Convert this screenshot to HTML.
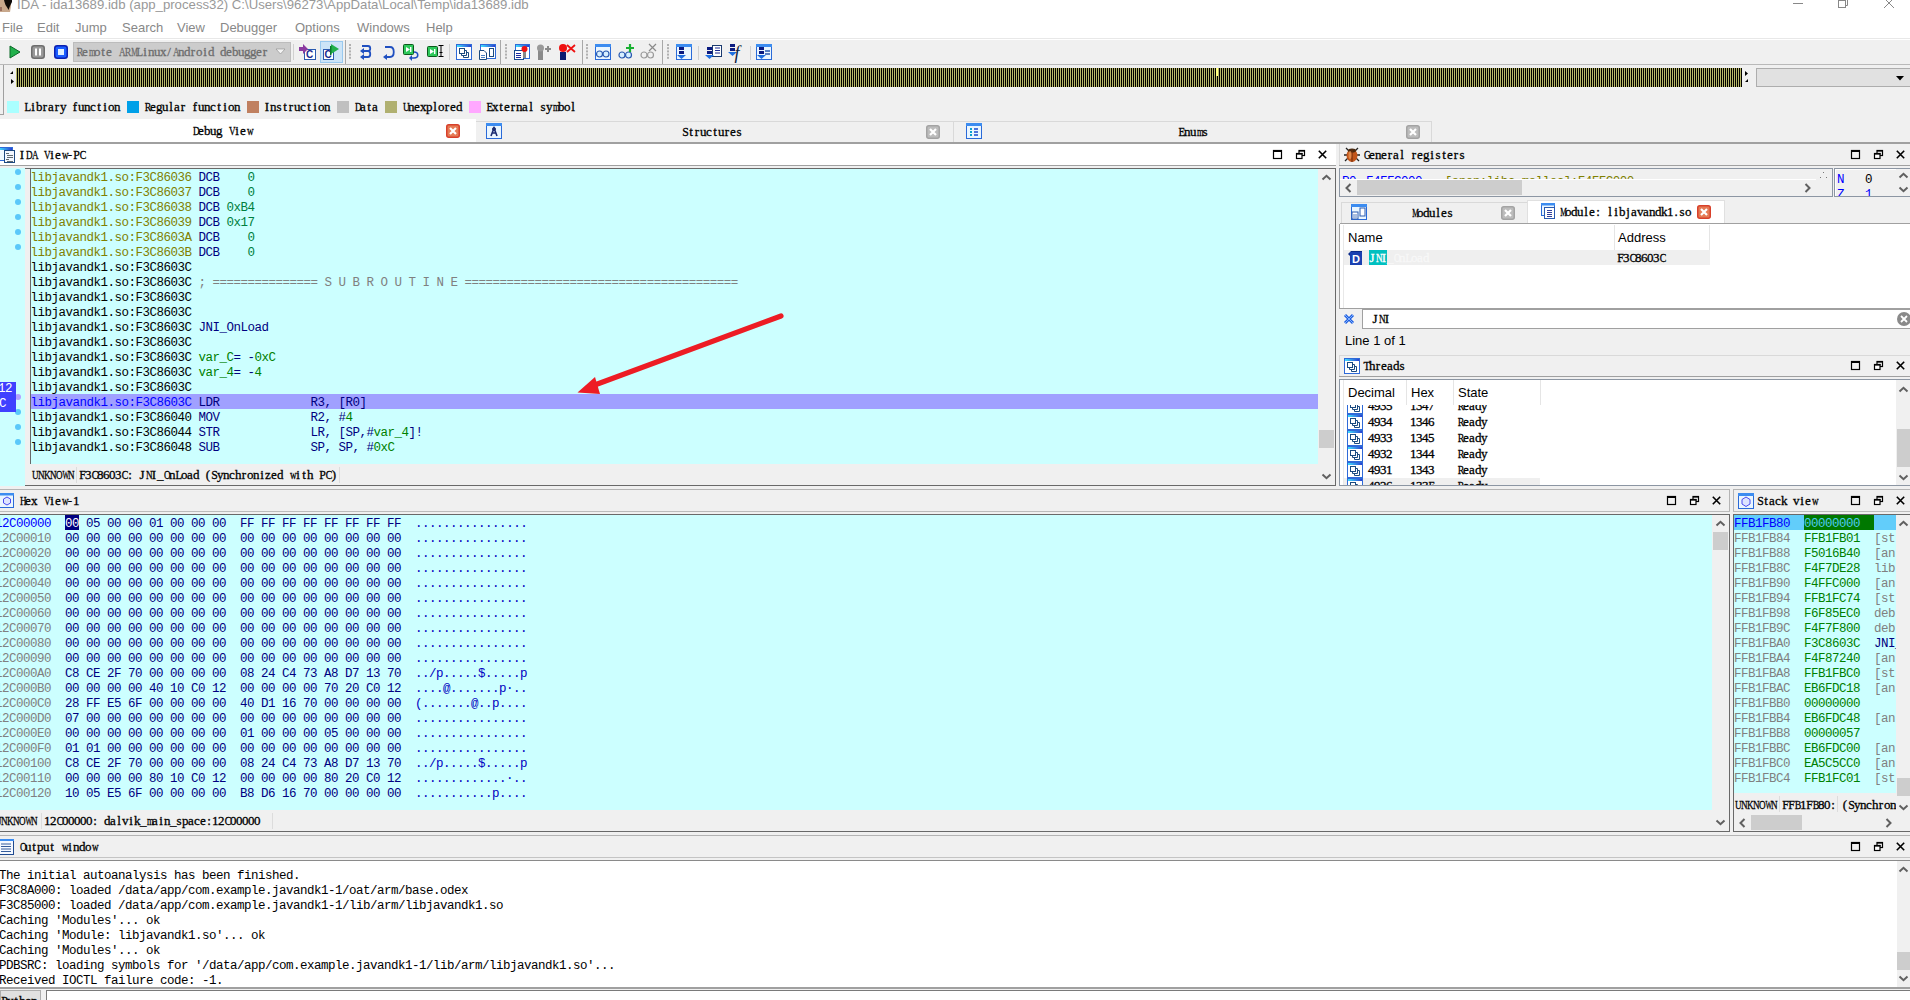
<!DOCTYPE html><html><head><meta charset="utf-8"><style>
*{margin:0;padding:0;box-sizing:border-box}
html,body{width:1910px;height:1000px;overflow:hidden;background:#f0f0f0;position:relative}
body{font-family:"Liberation Sans",sans-serif}
.a{position:absolute}
.m{font-family:"Liberation Mono",monospace;font-size:12.5px;letter-spacing:-0.5px;line-height:15px;white-space:pre}
.u{position:absolute;font-family:"Liberation Serif",serif;font-size:13px;line-height:12px;white-space:pre;color:#000;-webkit-text-stroke:0.3px currentColor}
.u i{display:inline-block;width:6px;text-align:center;font-style:normal}
.s{position:absolute;font-family:"Liberation Sans",sans-serif;white-space:pre;line-height:14px}
svg{position:absolute;overflow:visible}
</style></head><body>
<div class="a" style="left:0px;top:0px;width:1910px;height:38px;background:#fff"></div>
<div class="a" style="left:0px;top:38px;width:1910px;height:1px;background:#e8e8e8"></div>
<svg style="left:0px;top:0px" width="12" height="12" viewBox="0 0 12 12"><path d="M0 0H11V6L10 12H0Z" fill="#c8a88c"/><path d="M4 0H12V2L11 4L10 6L8.5 10L7.5 8L5.5 5L4.5 2Z" fill="#0e0a08"/><rect x="0" y="7" width="2" height="4" fill="#9a7060"/></svg>
<div class="s" style="left:17px;top:-3px;font-size:13.2px;line-height:16px;color:#999">IDA - ida13689.idb (app_process32) C:\Users\96273\AppData\Local\Temp\ida13689.idb</div>
<svg style="left:1793px;top:3px" width="10" height="1" viewBox="0 0 10 1"><rect width="10" height="1" fill="#888"/></svg>
<svg style="left:1838px;top:0px" width="10" height="8" viewBox="0 0 10 8"><path d="M2.5 0V-1.5H9.5V5.5H7.5" fill="none" stroke="#888"/><rect x="0.5" y="0.5" width="7" height="7" fill="none" stroke="#888"/></svg>
<svg style="left:1884px;top:0px" width="10" height="8" viewBox="0 0 10 8"><path d="M0 -2L10 8M10 -2L0 8" stroke="#888"/></svg>
<div class="s" style="left:2px;top:20px;font-size:13px;line-height:16px;color:#888">File</div>
<div class="s" style="left:37px;top:20px;font-size:13px;line-height:16px;color:#888">Edit</div>
<div class="s" style="left:75px;top:20px;font-size:13px;line-height:16px;color:#888">Jump</div>
<div class="s" style="left:122px;top:20px;font-size:13px;line-height:16px;color:#888">Search</div>
<div class="s" style="left:177px;top:20px;font-size:13px;line-height:16px;color:#888">View</div>
<div class="s" style="left:220px;top:20px;font-size:13px;line-height:16px;color:#888">Debugger</div>
<div class="s" style="left:295px;top:20px;font-size:13px;line-height:16px;color:#888">Options</div>
<div class="s" style="left:357px;top:20px;font-size:13px;line-height:16px;color:#888">Windows</div>
<div class="s" style="left:426px;top:20px;font-size:13px;line-height:16px;color:#888">Help</div>
<div class="a" style="left:0px;top:39px;width:1910px;height:1px;background:#fff"></div>
<div class="a" style="left:0px;top:40px;width:1910px;height:24px;background:#f0f0f0"></div>
<div class="a" style="left:0px;top:64px;width:1910px;height:1px;background:#b9b9b9"></div>
<svg style="left:9px;top:45px" width="12" height="14" viewBox="0 0 12 14"><path d="M1 1L11 7L1 13Z" fill="#22b14c" stroke="#0c6a28" stroke-width="1"/></svg>
<svg style="left:31px;top:45px" width="14" height="14" viewBox="0 0 14 14"><rect x="0.75" y="0.75" width="12.5" height="12.5" rx="2.5" fill="#9a9a9a" stroke="#6e6e6e" stroke-width="1.5"/><rect x="4" y="3.5" width="2" height="7" fill="#fff"/><rect x="8" y="3.5" width="2" height="7" fill="#fff"/></svg>
<svg style="left:54px;top:45px" width="14" height="14" viewBox="0 0 14 14"><rect x="0.75" y="0.75" width="12.5" height="12.5" rx="2.5" fill="#1a5cff" stroke="#0a1fb0" stroke-width="1.5"/><rect x="4" y="4" width="6" height="6" fill="#e0f0ff"/></svg>
<div class="a" style="left:73px;top:42px;width:218px;height:20px;background:#cccccc;border:1px solid #bcbcbc"></div>
<div class="u" style="left:76px;top:46px;color:#6d6d6d"><i style="transform:scaleX(0.761)">R</i><i>e</i><i style="transform:scaleX(0.653)">m</i><i>o</i><i>t</i><i>e</i><i>&nbsp;</i><i style="transform:scaleX(0.703)">A</i><i style="transform:scaleX(0.761)">R</i><i style="transform:scaleX(0.571)">M</i><i style="transform:scaleX(0.831)">L</i><i>i</i><i>n</i><i>u</i><i>x</i><i>/</i><i style="transform:scaleX(0.703)">A</i><i>n</i><i>d</i><i>r</i><i>o</i><i>i</i><i>d</i><i>&nbsp;</i><i>d</i><i>e</i><i>b</i><i>u</i><i>g</i><i>g</i><i>e</i><i>r</i></div>
<svg style="left:276px;top:49px" width="9" height="5" viewBox="0 0 9 5"><path d="M0 0H9L4.5 5Z" fill="#f4f4f4" stroke="#8a8a8a" stroke-width="0.6"/></svg>
<div class="a" style="left:293px;top:44px;width:1px;height:16px;background:#d0d0d0"></div>
<svg style="left:299px;top:44px" width="18" height="17" viewBox="0 0 18 17"><rect x="5.5" y="5.5" width="11" height="10" fill="#fff" stroke="#2a5ab0"/><text x="7" y="14" font-family="Liberation Sans" font-weight="bold" font-size="10" fill="#1a2a90">C</text><path d="M0 3H4V0L9 5L4 10V7H0Z" fill="#8a3aa0"/></svg>
<div class="a" style="left:320px;top:41px;width:23px;height:22px;background:#cce4f7;border:1px solid #99c9ef"></div>
<svg style="left:322px;top:44px" width="18" height="17" viewBox="0 0 18 17"><rect x="1.5" y="5.5" width="10" height="10" fill="#fff" stroke="#2a5ab0"/><text x="2.5" y="14" font-family="Liberation Sans" font-weight="bold" font-size="10" fill="#1a2a90">C</text><path d="M9 0L17 5L9 10Z" fill="#22b14c"/><rect x="8" y="2" width="1.5" height="9" fill="#0a7a2a"/></svg>
<div class="a" style="left:345px;top:40px;width:1px;height:24px;background:#a8a8a8"></div>
<svg style="left:349px;top:44px" width="3" height="16" viewBox="0 0 3 16"><rect x="0" y="0.0" width="2" height="2" fill="#b0b0b0"/><rect x="0" y="3.2" width="2" height="2" fill="#b0b0b0"/><rect x="0" y="6.4" width="2" height="2" fill="#b0b0b0"/><rect x="0" y="9.600000000000001" width="2" height="2" fill="#b0b0b0"/><rect x="0" y="12.8" width="2" height="2" fill="#b0b0b0"/></svg>
<svg style="left:359px;top:44px" width="14" height="17" viewBox="0 0 14 17"><path d="M3 2H9C12 2 12 7 9 7H4M9 7C12 7 12 13 9 13H3" fill="none" stroke="#1f4fc0" stroke-width="1.8"/><path d="M1 7L5 4V10Z" fill="#1f4fc0"/><path d="M1 13L5 10V16Z" fill="#1f4fc0"/></svg>
<svg style="left:382px;top:44px" width="14" height="17" viewBox="0 0 14 17"><path d="M3 3H8C13 3 13 13 8 13H3" fill="none" stroke="#1f4fc0" stroke-width="1.8"/><path d="M1 13L5 10V16Z" fill="#1f4fc0"/></svg>
<svg style="left:403px;top:44px" width="17" height="17" viewBox="0 0 17 17"><rect x="0.5" y="0.5" width="10" height="10" rx="1" fill="#2ec85a" stroke="#0a5a1a"/><path d="M3 3L7 5.5L3 8Z" fill="#fff"/><rect x="7" y="3" width="1.4" height="5" fill="#fff"/><path d="M11 8C16 8 16 14 11 14H8" fill="none" stroke="#1f4fc0" stroke-width="1.6"/><path d="M6 14L9 11V17Z" fill="#1f4fc0"/></svg>
<svg style="left:427px;top:43px" width="17" height="17" viewBox="0 0 17 17"><rect x="0.5" y="3.5" width="10" height="10" rx="1" fill="#2ec85a" stroke="#0a5a1a"/><path d="M3 6L7 8.5L3 11Z" fill="#fff"/><rect x="7" y="6" width="1.4" height="5" fill="#fff"/><path d="M11.5 2.5H16.5M11.5 13.5H16.5M14 2.5V13.5M12.5 9.5H15.5" stroke="#000" stroke-width="1"/></svg>
<div class="a" style="left:449px;top:44px;width:1px;height:16px;background:#d0d0d0"></div>
<svg style="left:456px;top:44px" width="17" height="17" viewBox="0 0 17 17"><defs><linearGradient id="tg" x1="0" x2="1"><stop offset="0" stop-color="#40e0ff"/><stop offset="1" stop-color="#2a40d0"/></linearGradient></defs><rect x="0.5" y="0.5" width="15" height="15" fill="#fff" stroke="#2f6ad8"/><rect x="1" y="1" width="14" height="2" fill="url(#tg)"/><rect x="3.5" y="4.5" width="5" height="5" fill="#fff" stroke="#1a4a80"/><path d="M9 6.5H10.5V11.5H5.5V10" fill="none" stroke="#1a4a80"/><path d="M11 8.5H12.5V13.5H7.5V12" fill="none" stroke="#1a4a80"/></svg>
<svg style="left:479px;top:44px" width="17" height="17" viewBox="0 0 17 17"><rect x="1.5" y="0.5" width="15" height="14" fill="#fff" stroke="#2f6ad8"/><rect x="2" y="1" width="14" height="2" fill="url(#tg)"/><path d="M0.5 6.5H5L7.5 9V15.5H0.5Z" fill="#fff" stroke="#1a4a80"/><path d="M2 11.5H6M2 13.5H6" stroke="#4a80c0"/><rect x="10.5" y="4.5" width="4" height="8" fill="#fff" stroke="#1a4a80"/></svg>
<div class="a" style="left:500px;top:40px;width:1px;height:24px;background:#a8a8a8"></div>
<svg style="left:505px;top:44px" width="3" height="16" viewBox="0 0 3 16"><rect x="0" y="0.0" width="2" height="2" fill="#b0b0b0"/><rect x="0" y="3.2" width="2" height="2" fill="#b0b0b0"/><rect x="0" y="6.4" width="2" height="2" fill="#b0b0b0"/><rect x="0" y="9.600000000000001" width="2" height="2" fill="#b0b0b0"/><rect x="0" y="12.8" width="2" height="2" fill="#b0b0b0"/></svg>
<svg style="left:514px;top:44px" width="17" height="17" viewBox="0 0 17 17"><rect x="1.5" y="0.5" width="14" height="14" fill="#fff" stroke="#2f6ad8"/><rect x="2" y="1" width="13" height="2" fill="url(#tg)"/><rect x="0.5" y="6.5" width="9" height="9" fill="#fff" stroke="#1a4a90"/><path d="M2 9.5H7M2 11.5H7M2 13.5H7" stroke="#1a2aa0"/><rect x="9" y="7" width="3" height="7" fill="#888"/><circle cx="10.5" cy="5" r="3" fill="#ee1111"/></svg>
<svg style="left:537px;top:44px" width="17" height="17" viewBox="0 0 17 17"><rect x="1" y="6" width="5" height="10" fill="#8a8a8a"/><circle cx="3.5" cy="4" r="3.5" fill="#9a9a9a"/><path d="M8 5H14M11 2V8" stroke="#8a8a8a" stroke-width="2"/></svg>
<svg style="left:559px;top:44px" width="17" height="17" viewBox="0 0 17 17"><rect x="1" y="8" width="6" height="8" fill="#0a1a70"/><circle cx="4" cy="4" r="4" fill="#ee1111"/><path d="M8 1L16 8M16 1L8 8" stroke="#ee1111" stroke-width="1.8"/></svg>
<div class="a" style="left:582px;top:40px;width:1px;height:24px;background:#a8a8a8"></div>
<svg style="left:586px;top:44px" width="3" height="16" viewBox="0 0 3 16"><rect x="0" y="0.0" width="2" height="2" fill="#b0b0b0"/><rect x="0" y="3.2" width="2" height="2" fill="#b0b0b0"/><rect x="0" y="6.4" width="2" height="2" fill="#b0b0b0"/><rect x="0" y="9.600000000000001" width="2" height="2" fill="#b0b0b0"/><rect x="0" y="12.8" width="2" height="2" fill="#b0b0b0"/></svg>
<svg style="left:595px;top:44px" width="16" height="16" viewBox="0 0 16 16"><rect x="0.5" y="0.5" width="15" height="15" fill="#eaf6ff" stroke="#2a6ad8"/><rect x="0" y="0" width="16" height="3" fill="#3c8cf0"/><circle cx="4.5" cy="10" r="3" fill="#d8f0ff" stroke="#2a5ab0" stroke-width="1.2"/><circle cx="11" cy="10" r="3" fill="#d8f0ff" stroke="#2a5ab0" stroke-width="1.2"/></svg>
<svg style="left:618px;top:44px" width="17" height="17" viewBox="0 0 17 17"><circle cx="4" cy="11" r="3" fill="#d8f0ff" stroke="#2a5ab0" stroke-width="1.2"/><circle cx="10.5" cy="11" r="3" fill="#d8f0ff" stroke="#2a5ab0" stroke-width="1.2"/><path d="M8 4H16M12 0V8" stroke="#18b030" stroke-width="2.2"/></svg>
<svg style="left:640px;top:44px" width="17" height="17" viewBox="0 0 17 17"><circle cx="4" cy="11" r="3" fill="#f0f0f0" stroke="#9a9a9a" stroke-width="1.2"/><circle cx="10.5" cy="11" r="3" fill="#f0f0f0" stroke="#9a9a9a" stroke-width="1.2"/><path d="M9 0L16 7M16 0L9 7" stroke="#8a8a8a" stroke-width="1.2"/></svg>
<div class="a" style="left:662px;top:40px;width:1px;height:24px;background:#a8a8a8"></div>
<svg style="left:667px;top:44px" width="3" height="16" viewBox="0 0 3 16"><rect x="0" y="0.0" width="2" height="2" fill="#b0b0b0"/><rect x="0" y="3.2" width="2" height="2" fill="#b0b0b0"/><rect x="0" y="6.4" width="2" height="2" fill="#b0b0b0"/><rect x="0" y="9.600000000000001" width="2" height="2" fill="#b0b0b0"/><rect x="0" y="12.8" width="2" height="2" fill="#b0b0b0"/></svg>
<svg style="left:676px;top:44px" width="16" height="16" viewBox="0 0 16 16"><rect x="0.5" y="0.5" width="15" height="15" fill="#eaf6ff" stroke="#2a6ad8"/><rect x="0" y="0" width="16" height="3" fill="#3c8cf0"/><rect x="3" y="3" width="5" height="3" fill="#0a1a80"/><rect x="3" y="7" width="5" height="3" fill="#0a1a80"/><path d="M1 11H10L5.5 15Z" fill="#1f6fe0"/></svg>
<div class="a" style="left:698px;top:46px;width:1px;height:14px;background:#d0d0d0"></div>
<svg style="left:705px;top:44px" width="17" height="17" viewBox="0 0 17 17"><rect x="7.5" y="1.5" width="9" height="11" fill="#fff" stroke="#1a3a70"/><path d="M10 4H15M10 6.5H15M10 9H15" stroke="#1a2a90"/><rect x="2" y="3" width="5" height="3" fill="#0a1a80"/><rect x="2" y="7" width="5" height="3" fill="#0a1a80"/><path d="M0 11H9L4.5 15Z" fill="#1f6fe0"/></svg>
<svg style="left:728px;top:44px" width="17" height="17" viewBox="0 0 17 17"><rect x="2" y="0" width="5" height="3" fill="#0a1a80"/><rect x="2" y="4" width="5" height="3" fill="#0a1a80"/><path d="M0 8H9L4.5 12Z" fill="#1f6fe0"/><text x="6.5" y="15" font-family="Liberation Serif" font-style="italic" font-size="18" fill="#0a1a40">f</text></svg>
<div class="a" style="left:750px;top:46px;width:1px;height:14px;background:#d0d0d0"></div>
<svg style="left:756px;top:44px" width="16" height="16" viewBox="0 0 16 16"><rect x="0.5" y="0.5" width="15" height="15" fill="#eaf6ff" stroke="#2a6ad8"/><rect x="0" y="0" width="16" height="3" fill="#3c8cf0"/><rect x="3" y="3" width="5" height="3" fill="#0a1a80"/><rect x="3" y="7" width="5" height="3" fill="#0a1a80"/><path d="M1 11H10L5.5 15Z" fill="#1f6fe0"/><path d="M9 7H14M9 10H14" stroke="#2a5ab0" stroke-width="1.5"/></svg>
<div class="a" style="left:3px;top:65px;width:1px;height:50px;background:#a0a0a0"></div>
<div class="a" style="left:0px;top:114px;width:4px;height:1px;background:#a0a0a0"></div>
<div class="a" style="left:16px;top:68px;width:1726px;height:19px;background:repeating-linear-gradient(90deg,#b8b868 0 1px,#000 1px 2px)"></div>
<div class="a" style="left:1216px;top:68px;width:2px;height:8px;background:#ffff80"></div>
<svg style="left:10px;top:71px" width="3" height="3" viewBox="0 0 3 3"><path d="M0 3L3 0V3Z" fill="#000"/></svg>
<svg style="left:11px;top:79px" width="3" height="5" viewBox="0 0 3 5"><path d="M0 0L3 2.5L0 5Z" fill="#000"/></svg>
<svg style="left:1745px;top:71px" width="3" height="5" viewBox="0 0 3 5"><path d="M0 0L3 2.5L0 5Z" fill="#000"/></svg>
<svg style="left:1745px;top:79px" width="3" height="3" viewBox="0 0 3 3"><path d="M0 3L3 0V3Z" fill="#000"/></svg>
<div class="a" style="left:1756px;top:68px;width:154px;height:19px;background:#e1e1e1;border:1px solid #adadad;border-right:none"></div>
<svg style="left:1896px;top:76px" width="8" height="5" viewBox="0 0 8 5"><path d="M0 0H8L4 4.5Z" fill="#000"/></svg>
<div class="a" style="left:7px;top:101px;width:12px;height:12px;background:#aaffff"></div>
<div class="u" style="left:24px;top:101px;color:#000;"><i style="transform:scaleX(0.831)">L</i><i>i</i><i>b</i><i>r</i><i>a</i><i>r</i><i>y</i><i>&nbsp;</i><i>f</i><i>u</i><i>n</i><i>c</i><i>t</i><i>i</i><i>o</i><i>n</i></div>
<div class="a" style="left:127px;top:101px;width:12px;height:12px;background:#00a0e8"></div>
<div class="u" style="left:144px;top:101px;color:#000;"><i style="transform:scaleX(0.761)">R</i><i>e</i><i>g</i><i>u</i><i>l</i><i>a</i><i>r</i><i>&nbsp;</i><i>f</i><i>u</i><i>n</i><i>c</i><i>t</i><i>i</i><i>o</i><i>n</i></div>
<div class="a" style="left:247px;top:101px;width:12px;height:12px;background:#c08060"></div>
<div class="u" style="left:264px;top:101px;color:#000;"><i>I</i><i>n</i><i>s</i><i>t</i><i>r</i><i>u</i><i>c</i><i>t</i><i>i</i><i>o</i><i>n</i></div>
<div class="a" style="left:337px;top:101px;width:12px;height:12px;background:#c0c0c0"></div>
<div class="u" style="left:354px;top:101px;color:#000;"><i style="transform:scaleX(0.703)">D</i><i>a</i><i>t</i><i>a</i></div>
<div class="a" style="left:385px;top:101px;width:12px;height:12px;background:#b0b070"></div>
<div class="u" style="left:402px;top:101px;color:#000;"><i style="transform:scaleX(0.703)">U</i><i>n</i><i>e</i><i>x</i><i>p</i><i>l</i><i>o</i><i>r</i><i>e</i><i>d</i></div>
<div class="a" style="left:469px;top:101px;width:12px;height:12px;background:#ffa8ff"></div>
<div class="u" style="left:486px;top:101px;color:#000;"><i style="transform:scaleX(0.831)">E</i><i>x</i><i>t</i><i>e</i><i>r</i><i>n</i><i>a</i><i>l</i><i>&nbsp;</i><i>s</i><i>y</i><i style="transform:scaleX(0.653)">m</i><i>b</i><i>o</i><i>l</i></div>
<div class="a" style="left:0px;top:120px;width:1910px;height:24px;background:#f0f0f0"></div>
<div class="a" style="left:0px;top:119px;width:476px;height:24px;background:#fff"></div>
<div class="a" style="left:476px;top:121px;width:478px;height:21px;background:#f0f0f0;border-top:1px solid #d9d9d9;border-right:1px solid #d9d9d9"></div>
<div class="a" style="left:954px;top:121px;width:478px;height:21px;background:#f0f0f0;border-top:1px solid #d9d9d9;border-right:1px solid #d9d9d9"></div>
<div class="a" style="left:0px;top:142px;width:1910px;height:2px;background:#a0a0a0"></div>
<div class="u" style="left:192px;top:125px;color:#000;"><i style="transform:scaleX(0.703)">D</i><i>e</i><i>b</i><i>u</i><i>g</i><i>&nbsp;</i><i style="transform:scaleX(0.703)">V</i><i>i</i><i>e</i><i style="transform:scaleX(0.703)">w</i></div>
<svg style="left:446px;top:124px" width="14" height="14" viewBox="0 0 14 14"><rect x="0.75" y="0.75" width="12.5" height="12.5" rx="2" fill="#e57a55" stroke="#d8402a" stroke-width="1.5"/><path d="M4 4L10 10M10 4L4 10" stroke="#fff" stroke-width="2.2"/></svg>
<svg style="left:486px;top:123px" width="16" height="16" viewBox="0 0 16 16"><rect x="0.5" y="0.5" width="15" height="15" fill="#eaf6ff" stroke="#2a6ad8"/><rect x="0" y="0" width="16" height="3" fill="#3c8cf0"/><path d="M5 13L8 5L11 13M6 10H10" fill="none" stroke="#1a2a70" stroke-width="1.6"/><circle cx="8" cy="6" r="1.5" fill="none" stroke="#1a2a70"/></svg>
<div class="u" style="left:682px;top:126px;color:#000;"><i style="transform:scaleX(0.912)">S</i><i>t</i><i>r</i><i>u</i><i>c</i><i>t</i><i>u</i><i>r</i><i>e</i><i>s</i></div>
<svg style="left:926px;top:125px" width="14" height="14" viewBox="0 0 14 14"><rect x="0.75" y="0.75" width="12.5" height="12.5" rx="2" fill="#bcbcbc" stroke="#a3a3a3" stroke-width="1.5"/><path d="M4 4L10 10M10 4L4 10" stroke="#fff" stroke-width="2.2"/></svg>
<svg style="left:966px;top:123px" width="16" height="16" viewBox="0 0 16 16"><rect x="0.5" y="0.5" width="15" height="15" fill="#eaf6ff" stroke="#2a6ad8"/><rect x="0" y="0" width="16" height="3" fill="#3c8cf0"/><path d="M4 6H6M4 9H6M4 12H6" stroke="#0aa0d0" stroke-width="2"/><path d="M8 6H12M8 9H12M8 12H12" stroke="#1a4ad0" stroke-width="1.5"/></svg>
<div class="u" style="left:1178px;top:126px;color:#000;"><i style="transform:scaleX(0.831)">E</i><i>n</i><i>u</i><i style="transform:scaleX(0.653)">m</i><i>s</i></div>
<svg style="left:1406px;top:125px" width="14" height="14" viewBox="0 0 14 14"><rect x="0.75" y="0.75" width="12.5" height="12.5" rx="2" fill="#bcbcbc" stroke="#a3a3a3" stroke-width="1.5"/><path d="M4 4L10 10M10 4L4 10" stroke="#fff" stroke-width="2.2"/></svg>
<div class="a" style="left:0px;top:144px;width:1336px;height:21px;background:#fff"></div>
<div class="a" style="left:0px;top:165px;width:1336px;height:1px;background:#a0a0a0"></div>
<div class="a" style="left:0px;top:166px;width:1336px;height:2px;background:#f0f0f0"></div>
<div class="a" style="left:0px;top:168px;width:1336px;height:318px;background:#f0f0f0;border-top:1px solid #696969;border-right:1px solid #696969;border-bottom:1px solid #696969"></div>
<div class="a" style="left:0px;top:168px;width:25px;height:318px;background:#ccffff"></div>
<div class="a" style="left:30px;top:168px;width:1px;height:296px;background:#696969"></div>
<div class="a" style="left:31px;top:169px;width:1287px;height:295px;background:#ccffff"></div>
<svg style="left:0px;top:147px" width="16" height="17" viewBox="0 0 16 17"><rect x="-1.5" y="0.5" width="14" height="13" fill="#f0faff" stroke="#2f6ad8"/><rect x="-1" y="1" width="13" height="2" fill="url(#tg)"/><rect x="4.5" y="3.5" width="10" height="12" fill="#f4f8ff" stroke="#1f4a80"/><path d="M6 6.5H9M7 8.5H13M7 10.5H13M6 12.5H9M7 14.5H13" stroke="#505a60" stroke-width="0.9"/></svg>
<div class="u" style="left:19px;top:149px;color:#000;"><i>I</i><i style="transform:scaleX(0.703)">D</i><i style="transform:scaleX(0.703)">A</i><i>&nbsp;</i><i style="transform:scaleX(0.703)">V</i><i>i</i><i>e</i><i style="transform:scaleX(0.703)">w</i><i>-</i><i style="transform:scaleX(0.912)">P</i><i style="transform:scaleX(0.761)">C</i></div>
<svg style="left:1273px;top:150px" width="9" height="9" viewBox="0 0 9 9"><rect x="0.5" y="0.5" width="8" height="8" fill="none" stroke="#000" stroke-width="1.2"/><rect x="0" y="0" width="9" height="2" fill="#000"/></svg>
<svg style="left:1296px;top:150px" width="9" height="9" viewBox="0 0 9 9"><rect x="3" y="0.5" width="5.5" height="5" fill="none" stroke="#000" stroke-width="1.2"/><rect x="3" y="0" width="6" height="1.6" fill="#000"/><rect x="0.5" y="3.5" width="5.5" height="5" fill="#fff" stroke="#000" stroke-width="1.2"/><rect x="0" y="3" width="6.5" height="1.6" fill="#000"/></svg>
<svg style="left:1318px;top:150px" width="9" height="9" viewBox="0 0 9 9"><path d="M0.8 0.8L8.2 8.2M8.2 0.8L0.8 8.2" stroke="#000" stroke-width="1.6"/></svg>
<div class="a" style="left:31px;top:394px;width:1287px;height:15px;background:#a0a0ff"></div>
<div class="a m" style="left:30.5px;top:171px;"><span style="color:#808000">libjavandk1.so:F3C86036</span> <span style="color:#000080">DCB</span> <span style="color:#008040">   0</span>
<span style="color:#808000">libjavandk1.so:F3C86037</span> <span style="color:#000080">DCB</span> <span style="color:#008040">   0</span>
<span style="color:#808000">libjavandk1.so:F3C86038</span> <span style="color:#000080">DCB</span> <span style="color:#008040">0xB4</span>
<span style="color:#808000">libjavandk1.so:F3C86039</span> <span style="color:#000080">DCB</span> <span style="color:#008040">0x17</span>
<span style="color:#808000">libjavandk1.so:F3C8603A</span> <span style="color:#000080">DCB</span> <span style="color:#008040">   0</span>
<span style="color:#808000">libjavandk1.so:F3C8603B</span> <span style="color:#000080">DCB</span> <span style="color:#008040">   0</span>
<span style="color:#000000">libjavandk1.so:F3C8603C</span>
<span style="color:#000000">libjavandk1.so:F3C8603C</span> <span style="color:#808080">; =============== S U B R O U T I N E =======================================</span>
<span style="color:#000000">libjavandk1.so:F3C8603C</span>
<span style="color:#000000">libjavandk1.so:F3C8603C</span>
<span style="color:#000000">libjavandk1.so:F3C8603C</span> <span style="color:#000080">JNI_OnLoad</span>
<span style="color:#000000">libjavandk1.so:F3C8603C</span>
<span style="color:#000000">libjavandk1.so:F3C8603C</span> <span style="color:#008000">var_C</span><span style="color:#000080">= -</span><span style="color:#008000">0xC</span>
<span style="color:#000000">libjavandk1.so:F3C8603C</span> <span style="color:#008000">var_4</span><span style="color:#000080">= -</span><span style="color:#008000">4</span>
<span style="color:#000000">libjavandk1.so:F3C8603C</span>
<span style="color:#0000ff">libjavandk1.so:F3C8603C</span> <span style="color:#000080">LDR             R3, [R0]</span>
<span style="color:#000000">libjavandk1.so:F3C86040</span> <span style="color:#000080">MOV             R2, #</span><span style="color:#008000">4</span>
<span style="color:#000000">libjavandk1.so:F3C86044</span> <span style="color:#000080">STR             LR, [SP,#</span><span style="color:#008000">var_4</span><span style="color:#000080">]!</span>
<span style="color:#000000">libjavandk1.so:F3C86048</span> <span style="color:#000080">SUB             SP, SP, #</span><span style="color:#008000">0xC</span></div>
<svg style="left:15px;top:169px" width="6" height="6" viewBox="0 0 6 6"><circle cx="3" cy="3" r="3" fill="#5ac8fa"/></svg>
<svg style="left:15px;top:184px" width="6" height="6" viewBox="0 0 6 6"><circle cx="3" cy="3" r="3" fill="#5ac8fa"/></svg>
<svg style="left:15px;top:199px" width="6" height="6" viewBox="0 0 6 6"><circle cx="3" cy="3" r="3" fill="#5ac8fa"/></svg>
<svg style="left:15px;top:214px" width="6" height="6" viewBox="0 0 6 6"><circle cx="3" cy="3" r="3" fill="#5ac8fa"/></svg>
<svg style="left:15px;top:229px" width="6" height="6" viewBox="0 0 6 6"><circle cx="3" cy="3" r="3" fill="#5ac8fa"/></svg>
<svg style="left:15px;top:244px" width="6" height="6" viewBox="0 0 6 6"><circle cx="3" cy="3" r="3" fill="#5ac8fa"/></svg>
<svg style="left:15px;top:409px" width="6" height="6" viewBox="0 0 6 6"><circle cx="3" cy="3" r="3" fill="#5ac8fa"/></svg>
<svg style="left:15px;top:424px" width="6" height="6" viewBox="0 0 6 6"><circle cx="3" cy="3" r="3" fill="#5ac8fa"/></svg>
<svg style="left:15px;top:439px" width="6" height="6" viewBox="0 0 6 6"><circle cx="3" cy="3" r="3" fill="#5ac8fa"/></svg>
<svg style="left:15px;top:394px" width="6" height="6" viewBox="0 0 6 6"><circle cx="3" cy="3" r="3" fill="#b4a0ff"/></svg>
<div class="a" style="left:0px;top:382px;width:16px;height:30px;background:#4040ff"></div>
<div class="a m" style="left:-2px;top:382px;color:#fff">12</div>
<div class="a m" style="left:-1px;top:397px;color:#fff">C</div>
<div class="a" style="left:1318px;top:169px;width:17px;height:316px;background:#f0f0f0"></div>
<svg style="left:1322px;top:175px" width="9" height="5" viewBox="0 0 9 5"><path d="M0.5 4.5L4.5 0.8L8.5 4.5" fill="none" stroke="#606060" stroke-width="2"/></svg>
<svg style="left:1322px;top:474px" width="9" height="5" viewBox="0 0 9 5"><path d="M0.5 0.5L4.5 4.2L8.5 0.5" fill="none" stroke="#606060" stroke-width="2"/></svg>
<div class="a" style="left:1319px;top:430px;width:15px;height:18px;background:#cdcdcd"></div>
<div class="a" style="left:31px;top:464px;width:1287px;height:21px;background:#f0f0f0"></div>
<div class="u" style="left:31px;top:469px;color:#000;"><i style="transform:scaleX(0.703)">U</i><i style="transform:scaleX(0.703)">N</i><i style="transform:scaleX(0.703)">K</i><i style="transform:scaleX(0.703)">N</i><i style="transform:scaleX(0.703)">O</i><i style="transform:scaleX(0.538)">W</i><i style="transform:scaleX(0.703)">N</i></div>
<div class="a" style="left:76px;top:467px;width:1px;height:16px;background:#dcdcdc"></div>
<div class="u" style="left:79px;top:469px;color:#000;"><i style="transform:scaleX(0.912)">F</i><i>3</i><i style="transform:scaleX(0.761)">C</i><i>8</i><i>6</i><i>0</i><i>3</i><i style="transform:scaleX(0.761)">C</i><i>:</i><i>&nbsp;</i><i>J</i><i style="transform:scaleX(0.703)">N</i><i>I</i><i>_</i><i style="transform:scaleX(0.703)">O</i><i>n</i><i style="transform:scaleX(0.831)">L</i><i>o</i><i>a</i><i>d</i><i>&nbsp;</i><i>(</i><i style="transform:scaleX(0.912)">S</i><i>y</i><i>n</i><i>c</i><i>h</i><i>r</i><i>o</i><i>n</i><i>i</i><i>z</i><i>e</i><i>d</i><i>&nbsp;</i><i style="transform:scaleX(0.703)">w</i><i>i</i><i>t</i><i>h</i><i>&nbsp;</i><i style="transform:scaleX(0.912)">P</i><i style="transform:scaleX(0.761)">C</i><i>)</i></div>
<div class="a" style="left:339px;top:467px;width:1px;height:16px;background:#dcdcdc"></div>
<svg style="left:0px;top:0px" width="1910" height="1000" viewBox="0 0 1910 1000"><line x1="781" y1="316" x2="592" y2="386" stroke="#ed1c24" stroke-width="5.2" stroke-linecap="round"/><path d="M577.5 392.5L595 377L600 394Z" fill="#ed1c24"/></svg>
<div class="a" style="left:1339px;top:144px;width:571px;height:21px;background:#f0f0f0;border-left:1px solid #d9d9d9"></div>
<div class="a" style="left:1339px;top:165px;width:571px;height:1px;background:#a0a0a0"></div>
<svg style="left:1343px;top:146px" width="18" height="17" viewBox="0 0 18 17"><path d="M3 2L6 5M15 2L12 5M1 9H4M17 9H14M2 15L5 12M16 15L13 12" stroke="#222" stroke-width="1.3"/><ellipse cx="9" cy="9.5" rx="5.5" ry="6.5" fill="#c2551a"/><ellipse cx="9" cy="4.5" rx="4" ry="2" fill="#4a2a10"/><path d="M9 4V16" stroke="#6a2a0a"/><ellipse cx="7" cy="9" rx="1.5" ry="4" fill="#f0a060" opacity="0.7"/></svg>
<div class="u" style="left:1363px;top:149px;color:#000;"><i style="transform:scaleX(0.703)">G</i><i>e</i><i>n</i><i>e</i><i>r</i><i>a</i><i>l</i><i>&nbsp;</i><i>r</i><i>e</i><i>g</i><i>i</i><i>s</i><i>t</i><i>e</i><i>r</i><i>s</i></div>
<svg style="left:1851px;top:150px" width="9" height="9" viewBox="0 0 9 9"><rect x="0.5" y="0.5" width="8" height="8" fill="none" stroke="#000" stroke-width="1.2"/><rect x="0" y="0" width="9" height="2" fill="#000"/></svg>
<svg style="left:1874px;top:150px" width="9" height="9" viewBox="0 0 9 9"><rect x="3" y="0.5" width="5.5" height="5" fill="none" stroke="#000" stroke-width="1.2"/><rect x="3" y="0" width="6" height="1.6" fill="#000"/><rect x="0.5" y="3.5" width="5.5" height="5" fill="#fff" stroke="#000" stroke-width="1.2"/><rect x="0" y="3" width="6.5" height="1.6" fill="#000"/></svg>
<svg style="left:1896px;top:150px" width="9" height="9" viewBox="0 0 9 9"><path d="M0.8 0.8L8.2 8.2M8.2 0.8L0.8 8.2" stroke="#000" stroke-width="1.6"/></svg>
<div class="a" style="left:1339px;top:168px;width:494px;height:29px;background:#f0f0f0;border:1px solid #8c96a3"></div>
<div class="a" style="left:1340px;top:169px;width:476px;height:11px;overflow:hidden"><div class="m" style="position:absolute;left:2px;top:6px;color:#0000ff">R0</div><div class="m" style="position:absolute;left:26px;top:6px;color:#0000ff">F4FFC000 <span style="color:#000080;font-size:8px">&#9646;.</span> <span style="color:#808000">[anon:libc_malloc]:F4FFC000</span></div></div>
<div class="a" style="left:1340px;top:179px;width:476px;height:1px;background:#fff"></div>
<div class="a" style="left:1816px;top:169px;width:16px;height:27px;background:#f0f0f0"></div>
<svg style="left:1819px;top:172px" width="10" height="8" viewBox="0 0 10 8"><rect x="4" y="0" width="1" height="1" fill="#777"/><rect x="1" y="5" width="1" height="1" fill="#777"/><rect x="7" y="5" width="1" height="1" fill="#777"/></svg>
<svg style="left:1345px;top:183px" width="7" height="10" viewBox="0 0 7 10"><path d="M5.5 1L1.5 5L5.5 9" fill="none" stroke="#606060" stroke-width="2"/></svg>
<div class="a" style="left:1357px;top:180px;width:165px;height:15px;background:#cdcdcd"></div>
<svg style="left:1804px;top:183px" width="7" height="10" viewBox="0 0 7 10"><path d="M1.5 1L5.5 5L1.5 9" fill="none" stroke="#606060" stroke-width="2"/></svg>
<div class="a" style="left:1834px;top:168px;width:76px;height:29px;background:#f0f0f0;border:1px solid #8c96a3;border-right:none;box-shadow:inset 1px 1px 0 #fff"></div>
<div class="a" style="left:1835px;top:169px;width:62px;height:27px;overflow:hidden"><div class="m" style="position:absolute;left:2px;top:4px;color:#0000ff;line-height:15px">N   <span style="color:#000">0</span>
Z   1</div></div>
<div class="a" style="left:1896px;top:169px;width:14px;height:27px;background:#f0f0f0"></div>
<svg style="left:1899px;top:173px" width="9" height="5" viewBox="0 0 9 5"><path d="M0.5 4.5L4.5 0.8L8.5 4.5" fill="none" stroke="#606060" stroke-width="2"/></svg>
<svg style="left:1899px;top:187px" width="9" height="5" viewBox="0 0 9 5"><path d="M0.5 0.5L4.5 4.2L8.5 0.5" fill="none" stroke="#606060" stroke-width="2"/></svg>
<div class="a" style="left:1341px;top:202px;width:186px;height:21px;background:#f0f0f0;border-top:1px solid #d9d9d9;border-left:1px solid #d9d9d9"></div>
<div class="a" style="left:1527px;top:200px;width:198px;height:23px;background:#fff;border:1px solid #e0e0e0;border-bottom:none"></div>
<div class="a" style="left:1340px;top:223px;width:570px;height:1px;background:#a0a0a0"></div>
<svg style="left:1351px;top:204px" width="16" height="16" viewBox="0 0 16 16"><rect x="0.5" y="0.5" width="15" height="15" fill="#eaf6ff" stroke="#2a6ad8"/><rect x="0" y="0" width="16" height="3" fill="#3c8cf0"/><rect x="1" y="8" width="6" height="7" fill="#fff" stroke="#2a5ab0"/><path d="M2 11H6M2 13H6" stroke="#2a5ab0" stroke-width="0.8"/><rect x="9" y="4" width="5" height="8" fill="#fff" stroke="#2a5ab0"/></svg>
<div class="u" style="left:1411px;top:207px;color:#000;"><i style="transform:scaleX(0.571)">M</i><i>o</i><i>d</i><i>u</i><i>l</i><i>e</i><i>s</i></div>
<svg style="left:1501px;top:206px" width="14" height="14" viewBox="0 0 14 14"><rect x="0.75" y="0.75" width="12.5" height="12.5" rx="2" fill="#bcbcbc" stroke="#a3a3a3" stroke-width="1.5"/><path d="M4 4L10 10M10 4L4 10" stroke="#fff" stroke-width="2.2"/></svg>
<svg style="left:1541px;top:203px" width="16" height="16" viewBox="0 0 16 16"><rect x="0.5" y="0.5" width="13" height="12" fill="#eaf6ff" stroke="#2a6ad8"/><rect x="0" y="0" width="14" height="2.5" fill="#3c8cf0"/><rect x="3.5" y="4.5" width="10" height="11" fill="#fff" stroke="#2a5ab0"/><path d="M6 7.5H11M6 9.5H11M6 11.5H11M6 13.5H11" stroke="#1a2a90" stroke-width="0.9"/></svg>
<div class="u" style="left:1559px;top:206px;color:#000;"><i style="transform:scaleX(0.571)">M</i><i>o</i><i>d</i><i>u</i><i>l</i><i>e</i><i>:</i><i>&nbsp;</i><i>l</i><i>i</i><i>b</i><i>j</i><i>a</i><i>v</i><i>a</i><i>n</i><i>d</i><i>k</i><i>1</i><i>.</i><i>s</i><i>o</i></div>
<svg style="left:1697px;top:205px" width="14" height="14" viewBox="0 0 14 14"><rect x="0.75" y="0.75" width="12.5" height="12.5" rx="2" fill="#e57a55" stroke="#d8402a" stroke-width="1.5"/><path d="M4 4L10 10M10 4L4 10" stroke="#fff" stroke-width="2.2"/></svg>
<div class="a" style="left:1339px;top:224px;width:571px;height:85px;background:#fff;border-left:1px solid #a0a0a0;border-bottom:1px solid #a0a0a0"></div>
<div class="a" style="left:1343px;top:225px;width:1px;height:83px;background:#e8e8e8"></div>
<div class="s" style="left:1348px;top:231px;font-size:13px;color:#000">Name</div>
<div class="s" style="left:1618px;top:231px;font-size:13px;color:#000">Address</div>
<div class="a" style="left:1614px;top:225px;width:1px;height:25px;background:#e5e5e5"></div>
<div class="a" style="left:1709px;top:225px;width:1px;height:25px;background:#e5e5e5"></div>
<div class="a" style="left:1344px;top:250px;width:366px;height:15px;background:#efefef"></div>
<svg style="left:1347px;top:250px" width="17" height="16" viewBox="0 0 17 16"><path d="M1 4L4 1H15V15H3V6Z" fill="#0a2a8a"/><rect x="3" y="2" width="12" height="13" fill="#1a40b0"/><text x="5" y="13" font-family="Liberation Sans" font-weight="bold" font-size="11" fill="#fff">D</text></svg>
<div class="a" style="left:1369px;top:250px;width:18px;height:15px;background:#00c0c0"></div>
<div class="u" style="left:1369px;top:252px;color:#fff;"><i>J</i><i style="transform:scaleX(0.703)">N</i><i>I</i></div>
<div class="u" style="left:1387px;top:252px;color:#f8f8f8;"><i>_</i><i style="transform:scaleX(0.703)">O</i><i>n</i><i style="transform:scaleX(0.831)">L</i><i>o</i><i>a</i><i>d</i></div>
<div class="u" style="left:1617px;top:252px;color:#000;"><i style="transform:scaleX(0.912)">F</i><i>3</i><i style="transform:scaleX(0.761)">C</i><i>8</i><i>6</i><i>0</i><i>3</i><i style="transform:scaleX(0.761)">C</i></div>
<svg style="left:1343px;top:313px" width="12" height="12" viewBox="0 0 12 12"><path d="M2 2L10 10M10 2L2 10" stroke="#2060e0" stroke-width="3"/><path d="M2 2L10 10M10 2L2 10" stroke="#80b0ff" stroke-width="1"/></svg>
<div class="a" style="left:1362px;top:309px;width:548px;height:20px;background:#fff;border:1px solid #a0a0a0;border-right:none"></div>
<div class="u" style="left:1372px;top:313px;color:#000;"><i>J</i><i style="transform:scaleX(0.703)">N</i><i>I</i></div>
<svg style="left:1896px;top:311px" width="14" height="16" viewBox="0 0 14 16"><circle cx="8" cy="8" r="7" fill="#8a8a8a"/><path d="M5 5L11 11M11 5L5 11" stroke="#fff" stroke-width="1.8"/></svg>
<div class="s" style="left:1345px;top:334px;font-size:13px;color:#000">Line 1 of 1</div>
<div class="a" style="left:1339px;top:355px;width:571px;height:21px;background:#f0f0f0;border-left:1px solid #d9d9d9;border-top:1px solid #d9d9d9"></div>
<div class="a" style="left:1339px;top:376px;width:571px;height:1px;background:#a0a0a0"></div>
<svg style="left:1344px;top:358px" width="16" height="16" viewBox="0 0 16 16"><rect x="0.5" y="0.5" width="15" height="15" fill="#fff" stroke="#2f6ad8"/><rect x="1" y="1" width="14" height="2" fill="url(#tg)"/><rect x="3.5" y="4.5" width="5" height="5" fill="#fff" stroke="#1a4a80"/><path d="M9 6.5H10.5V11.5H5.5V10" fill="none" stroke="#1a4a80"/><path d="M11 8.5H12.5V13.5H7.5V12" fill="none" stroke="#1a4a80"/></svg>
<div class="u" style="left:1363px;top:360px;color:#000;"><i style="transform:scaleX(0.831)">T</i><i>h</i><i>r</i><i>e</i><i>a</i><i>d</i><i>s</i></div>
<svg style="left:1851px;top:361px" width="9" height="9" viewBox="0 0 9 9"><rect x="0.5" y="0.5" width="8" height="8" fill="none" stroke="#000" stroke-width="1.2"/><rect x="0" y="0" width="9" height="2" fill="#000"/></svg>
<svg style="left:1874px;top:361px" width="9" height="9" viewBox="0 0 9 9"><rect x="3" y="0.5" width="5.5" height="5" fill="none" stroke="#000" stroke-width="1.2"/><rect x="3" y="0" width="6" height="1.6" fill="#000"/><rect x="0.5" y="3.5" width="5.5" height="5" fill="#fff" stroke="#000" stroke-width="1.2"/><rect x="0" y="3" width="6.5" height="1.6" fill="#000"/></svg>
<svg style="left:1896px;top:361px" width="9" height="9" viewBox="0 0 9 9"><path d="M0.8 0.8L8.2 8.2M8.2 0.8L0.8 8.2" stroke="#000" stroke-width="1.6"/></svg>
<div class="a" style="left:1339px;top:379px;width:571px;height:107px;background:#fff;border:1px solid #8c96a3;border-right:none"></div>
<div class="a" style="left:1343px;top:380px;width:1px;height:105px;background:#e8e8e8"></div>
<div class="s" style="left:1348px;top:386px;font-size:13px;color:#000">Decimal</div>
<div class="s" style="left:1411px;top:386px;font-size:13px;color:#000">Hex</div>
<div class="s" style="left:1458px;top:386px;font-size:13px;color:#000">State</div>
<div class="a" style="left:1406px;top:380px;width:1px;height:25px;background:#e5e5e5"></div>
<div class="a" style="left:1453px;top:380px;width:1px;height:25px;background:#e5e5e5"></div>
<div class="a" style="left:1540px;top:380px;width:1px;height:25px;background:#e5e5e5"></div>
<div class="a" style="left:1341px;top:405px;width:555px;height:80px;overflow:hidden">
<div class="a" style="left:3px;top:73px;width:196px;height:7px;background:#efefef"></div>
<svg style="left:6px;top:-7px" width="16" height="16"><rect x="0.5" y="0.5" width="15" height="15" fill="#fff" stroke="#2f6ad8"/><rect x="1" y="1" width="14" height="2" fill="url(#tg)"/><rect x="3.5" y="4.5" width="5" height="5" fill="#fff" stroke="#1a4a80"/><path d="M9 6.5H10.5V11.5H5.5V10" fill="none" stroke="#1a4a80"/><path d="M11 8.5H12.5V13.5H7.5V12" fill="none" stroke="#1a4a80"/></svg>
<div class="u" style="left:27px;top:-5px;color:#000;"><i>4</i><i>9</i><i>3</i><i>5</i></div>
<div class="u" style="left:69px;top:-5px;color:#000;"><i>1</i><i>3</i><i>4</i><i>7</i></div>
<div class="u" style="left:116px;top:-5px;color:#000;"><i style="transform:scaleX(0.761)">R</i><i>e</i><i>a</i><i>d</i><i>y</i></div>
<svg style="left:6px;top:9px" width="16" height="16"><rect x="0.5" y="0.5" width="15" height="15" fill="#fff" stroke="#2f6ad8"/><rect x="1" y="1" width="14" height="2" fill="url(#tg)"/><rect x="3.5" y="4.5" width="5" height="5" fill="#fff" stroke="#1a4a80"/><path d="M9 6.5H10.5V11.5H5.5V10" fill="none" stroke="#1a4a80"/><path d="M11 8.5H12.5V13.5H7.5V12" fill="none" stroke="#1a4a80"/></svg>
<div class="u" style="left:27px;top:11px;color:#000;"><i>4</i><i>9</i><i>3</i><i>4</i></div>
<div class="u" style="left:69px;top:11px;color:#000;"><i>1</i><i>3</i><i>4</i><i>6</i></div>
<div class="u" style="left:116px;top:11px;color:#000;"><i style="transform:scaleX(0.761)">R</i><i>e</i><i>a</i><i>d</i><i>y</i></div>
<svg style="left:6px;top:25px" width="16" height="16"><rect x="0.5" y="0.5" width="15" height="15" fill="#fff" stroke="#2f6ad8"/><rect x="1" y="1" width="14" height="2" fill="url(#tg)"/><rect x="3.5" y="4.5" width="5" height="5" fill="#fff" stroke="#1a4a80"/><path d="M9 6.5H10.5V11.5H5.5V10" fill="none" stroke="#1a4a80"/><path d="M11 8.5H12.5V13.5H7.5V12" fill="none" stroke="#1a4a80"/></svg>
<div class="u" style="left:27px;top:27px;color:#000;"><i>4</i><i>9</i><i>3</i><i>3</i></div>
<div class="u" style="left:69px;top:27px;color:#000;"><i>1</i><i>3</i><i>4</i><i>5</i></div>
<div class="u" style="left:116px;top:27px;color:#000;"><i style="transform:scaleX(0.761)">R</i><i>e</i><i>a</i><i>d</i><i>y</i></div>
<svg style="left:6px;top:41px" width="16" height="16"><rect x="0.5" y="0.5" width="15" height="15" fill="#fff" stroke="#2f6ad8"/><rect x="1" y="1" width="14" height="2" fill="url(#tg)"/><rect x="3.5" y="4.5" width="5" height="5" fill="#fff" stroke="#1a4a80"/><path d="M9 6.5H10.5V11.5H5.5V10" fill="none" stroke="#1a4a80"/><path d="M11 8.5H12.5V13.5H7.5V12" fill="none" stroke="#1a4a80"/></svg>
<div class="u" style="left:27px;top:43px;color:#000;"><i>4</i><i>9</i><i>3</i><i>2</i></div>
<div class="u" style="left:69px;top:43px;color:#000;"><i>1</i><i>3</i><i>4</i><i>4</i></div>
<div class="u" style="left:116px;top:43px;color:#000;"><i style="transform:scaleX(0.761)">R</i><i>e</i><i>a</i><i>d</i><i>y</i></div>
<svg style="left:6px;top:57px" width="16" height="16"><rect x="0.5" y="0.5" width="15" height="15" fill="#fff" stroke="#2f6ad8"/><rect x="1" y="1" width="14" height="2" fill="url(#tg)"/><rect x="3.5" y="4.5" width="5" height="5" fill="#fff" stroke="#1a4a80"/><path d="M9 6.5H10.5V11.5H5.5V10" fill="none" stroke="#1a4a80"/><path d="M11 8.5H12.5V13.5H7.5V12" fill="none" stroke="#1a4a80"/></svg>
<div class="u" style="left:27px;top:59px;color:#000;"><i>4</i><i>9</i><i>3</i><i>1</i></div>
<div class="u" style="left:69px;top:59px;color:#000;"><i>1</i><i>3</i><i>4</i><i>3</i></div>
<div class="u" style="left:116px;top:59px;color:#000;"><i style="transform:scaleX(0.761)">R</i><i>e</i><i>a</i><i>d</i><i>y</i></div>
<svg style="left:6px;top:73px" width="16" height="16"><rect x="0.5" y="0.5" width="15" height="15" fill="#fff" stroke="#2f6ad8"/><rect x="1" y="1" width="14" height="2" fill="url(#tg)"/><rect x="3.5" y="4.5" width="5" height="5" fill="#fff" stroke="#1a4a80"/><path d="M9 6.5H10.5V11.5H5.5V10" fill="none" stroke="#1a4a80"/><path d="M11 8.5H12.5V13.5H7.5V12" fill="none" stroke="#1a4a80"/></svg>
<div class="u" style="left:27px;top:75px;color:#000;"><i>4</i><i>9</i><i>2</i><i>6</i></div>
<div class="u" style="left:69px;top:75px;color:#000;"><i>1</i><i>3</i><i>3</i><i style="transform:scaleX(0.831)">E</i></div>
<div class="u" style="left:116px;top:75px;color:#000;"><i style="transform:scaleX(0.761)">R</i><i>e</i><i>a</i><i>d</i><i>y</i></div>
</div>
<div class="a" style="left:1896px;top:380px;width:14px;height:105px;background:#f0f0f0"></div>
<svg style="left:1899px;top:387px" width="9" height="5" viewBox="0 0 9 5"><path d="M0.5 4.5L4.5 0.8L8.5 4.5" fill="none" stroke="#606060" stroke-width="2"/></svg>
<div class="a" style="left:1897px;top:429px;width:13px;height:38px;background:#cdcdcd"></div>
<svg style="left:1899px;top:475px" width="9" height="5" viewBox="0 0 9 5"><path d="M0.5 0.5L4.5 4.2L8.5 0.5" fill="none" stroke="#606060" stroke-width="2"/></svg>
<div class="a" style="left:0px;top:489px;width:1730px;height:22px;background:#f0f0f0;border-top:1px solid #b4b4b4;border-right:1px solid #b4b4b4"></div>
<div class="a" style="left:0px;top:511px;width:1730px;height:1px;background:#bcbcbc"></div>
<div class="a" style="left:0px;top:514px;width:1730px;height:318px;background:#f0f0f0;border-top:1px solid #696969;border-right:1px solid #696969;border-bottom:1px solid #696969"></div>
<div class="a" style="left:0px;top:515px;width:1712px;height:295px;background:#ccffff"></div>
<svg style="left:0px;top:493px" width="14" height="15" viewBox="0 0 14 15"><rect x="-2" y="0.5" width="15.5" height="14" fill="#eaf6ff" stroke="#2a6ad8"/><rect x="-2" y="0" width="16" height="2.5" fill="#3c8cf0"/><path d="M7 4L10.5 6V10L7 12L3.5 10V6Z" fill="#dde4ff" stroke="#4a4af0" stroke-width="1"/></svg>
<div class="u" style="left:19px;top:495px;color:#000;"><i style="transform:scaleX(0.703)">H</i><i>e</i><i>x</i><i>&nbsp;</i><i style="transform:scaleX(0.703)">V</i><i>i</i><i>e</i><i style="transform:scaleX(0.703)">w</i><i>-</i><i>1</i></div>
<svg style="left:1667px;top:496px" width="9" height="9" viewBox="0 0 9 9"><rect x="0.5" y="0.5" width="8" height="8" fill="none" stroke="#000" stroke-width="1.2"/><rect x="0" y="0" width="9" height="2" fill="#000"/></svg>
<svg style="left:1690px;top:496px" width="9" height="9" viewBox="0 0 9 9"><rect x="3" y="0.5" width="5.5" height="5" fill="none" stroke="#000" stroke-width="1.2"/><rect x="3" y="0" width="6" height="1.6" fill="#000"/><rect x="0.5" y="3.5" width="5.5" height="5" fill="#fff" stroke="#000" stroke-width="1.2"/><rect x="0" y="3" width="6.5" height="1.6" fill="#000"/></svg>
<svg style="left:1712px;top:496px" width="9" height="9" viewBox="0 0 9 9"><path d="M0.8 0.8L8.2 8.2M8.2 0.8L0.8 8.2" stroke="#000" stroke-width="1.6"/></svg>
<div class="a" style="left:65px;top:515px;width:14px;height:15px;background:#000080"></div>
<div class="a m" style="left:-5px;top:517px;color:#000080"><span style="color:#0000ff">12C00000</span>  <span style="color:#fff">00</span> 05 00 00 01 00 00 00  FF FF FF FF FF FF FF FF  <span style="color:#0000c0">................</span>
<span style="color:#808080">12C00010</span>  00 00 00 00 00 00 00 00  00 00 00 00 00 00 00 00  <span style="color:#0000c0">................</span>
<span style="color:#808080">12C00020</span>  00 00 00 00 00 00 00 00  00 00 00 00 00 00 00 00  <span style="color:#0000c0">................</span>
<span style="color:#808080">12C00030</span>  00 00 00 00 00 00 00 00  00 00 00 00 00 00 00 00  <span style="color:#0000c0">................</span>
<span style="color:#808080">12C00040</span>  00 00 00 00 00 00 00 00  00 00 00 00 00 00 00 00  <span style="color:#0000c0">................</span>
<span style="color:#808080">12C00050</span>  00 00 00 00 00 00 00 00  00 00 00 00 00 00 00 00  <span style="color:#0000c0">................</span>
<span style="color:#808080">12C00060</span>  00 00 00 00 00 00 00 00  00 00 00 00 00 00 00 00  <span style="color:#0000c0">................</span>
<span style="color:#808080">12C00070</span>  00 00 00 00 00 00 00 00  00 00 00 00 00 00 00 00  <span style="color:#0000c0">................</span>
<span style="color:#808080">12C00080</span>  00 00 00 00 00 00 00 00  00 00 00 00 00 00 00 00  <span style="color:#0000c0">................</span>
<span style="color:#808080">12C00090</span>  00 00 00 00 00 00 00 00  00 00 00 00 00 00 00 00  <span style="color:#0000c0">................</span>
<span style="color:#808080">12C000A0</span>  C8 CE 2F 70 00 00 00 00  08 24 C4 73 A8 D7 13 70  <span style="color:#0000c0">../p.....$.....p</span>
<span style="color:#808080">12C000B0</span>  00 00 00 00 40 10 C0 12  00 00 00 00 70 20 C0 12  <span style="color:#0000c0">....@.......p·..</span>
<span style="color:#808080">12C000C0</span>  28 FF E5 6F 00 00 00 00  40 D1 16 70 00 00 00 00  <span style="color:#0000c0">(.......@..p....</span>
<span style="color:#808080">12C000D0</span>  07 00 00 00 00 00 00 00  00 00 00 00 00 00 00 00  <span style="color:#0000c0">................</span>
<span style="color:#808080">12C000E0</span>  00 00 00 00 00 00 00 00  01 00 00 00 05 00 00 00  <span style="color:#0000c0">................</span>
<span style="color:#808080">12C000F0</span>  01 01 00 00 00 00 00 00  00 00 00 00 00 00 00 00  <span style="color:#0000c0">................</span>
<span style="color:#808080">12C00100</span>  C8 CE 2F 70 00 00 00 00  08 24 C4 73 A8 D7 13 70  <span style="color:#0000c0">../p.....$.....p</span>
<span style="color:#808080">12C00110</span>  00 00 00 00 80 10 C0 12  00 00 00 00 80 20 C0 12  <span style="color:#0000c0">.............·..</span>
<span style="color:#808080">12C00120</span>  10 05 E5 6F 00 00 00 00  B8 D6 16 70 00 00 00 00  <span style="color:#0000c0">...........p....</span></div>
<div class="a" style="left:0px;top:810px;width:1712px;height:21px;background:#f0f0f0"></div>
<div class="u" style="left:-6px;top:815px;color:#000;"><i style="transform:scaleX(0.703)">U</i><i style="transform:scaleX(0.703)">N</i><i style="transform:scaleX(0.703)">K</i><i style="transform:scaleX(0.703)">N</i><i style="transform:scaleX(0.703)">O</i><i style="transform:scaleX(0.538)">W</i><i style="transform:scaleX(0.703)">N</i></div>
<div class="a" style="left:41px;top:813px;width:1px;height:16px;background:#dcdcdc"></div>
<div class="u" style="left:44px;top:815px;color:#000;"><i>1</i><i>2</i><i style="transform:scaleX(0.761)">C</i><i>0</i><i>0</i><i>0</i><i>0</i><i>0</i><i>:</i><i>&nbsp;</i><i>d</i><i>a</i><i>l</i><i>v</i><i>i</i><i>k</i><i>_</i><i style="transform:scaleX(0.653)">m</i><i>a</i><i>i</i><i>n</i><i>_</i><i>s</i><i>p</i><i>a</i><i>c</i><i>e</i><i>:</i><i>1</i><i>2</i><i style="transform:scaleX(0.761)">C</i><i>0</i><i>0</i><i>0</i><i>0</i><i>0</i></div>
<div class="a" style="left:272px;top:813px;width:1px;height:16px;background:#dcdcdc"></div>
<div class="a" style="left:1712px;top:515px;width:17px;height:316px;background:#f0f0f0"></div>
<svg style="left:1716px;top:521px" width="9" height="5" viewBox="0 0 9 5"><path d="M0.5 4.5L4.5 0.8L8.5 4.5" fill="none" stroke="#606060" stroke-width="2"/></svg>
<div class="a" style="left:1713px;top:532px;width:15px;height:18px;background:#cdcdcd"></div>
<svg style="left:1716px;top:820px" width="9" height="5" viewBox="0 0 9 5"><path d="M0.5 0.5L4.5 4.2L8.5 0.5" fill="none" stroke="#606060" stroke-width="2"/></svg>
<div class="a" style="left:1733px;top:489px;width:177px;height:22px;background:#f0f0f0;border-top:1px solid #b4b4b4;border-left:1px solid #b4b4b4"></div>
<div class="a" style="left:1733px;top:511px;width:177px;height:1px;background:#bcbcbc"></div>
<div class="a" style="left:1733px;top:514px;width:177px;height:318px;background:#f0f0f0;border-top:1px solid #696969;border-left:1px solid #696969;border-bottom:1px solid #696969"></div>
<div class="a" style="left:1734px;top:515px;width:162px;height:278px;background:#ccffff"></div>
<svg style="left:1738px;top:493px" width="16" height="16" viewBox="0 0 16 16"><rect x="0.5" y="0.5" width="15" height="15" fill="#eaf6ff" stroke="#2a6ad8"/><rect x="0" y="0" width="16" height="3" fill="#3c8cf0"/><path d="M8 4L12 6.5V11L8 13.5L4 11V6.5Z" fill="#dde4ff" stroke="#4a4af0" stroke-width="1"/></svg>
<div class="u" style="left:1757px;top:495px;color:#000;"><i style="transform:scaleX(0.912)">S</i><i>t</i><i>a</i><i>c</i><i>k</i><i>&nbsp;</i><i>v</i><i>i</i><i>e</i><i style="transform:scaleX(0.703)">w</i></div>
<svg style="left:1851px;top:496px" width="9" height="9" viewBox="0 0 9 9"><rect x="0.5" y="0.5" width="8" height="8" fill="none" stroke="#000" stroke-width="1.2"/><rect x="0" y="0" width="9" height="2" fill="#000"/></svg>
<svg style="left:1874px;top:496px" width="9" height="9" viewBox="0 0 9 9"><rect x="3" y="0.5" width="5.5" height="5" fill="none" stroke="#000" stroke-width="1.2"/><rect x="3" y="0" width="6" height="1.6" fill="#000"/><rect x="0.5" y="3.5" width="5.5" height="5" fill="#fff" stroke="#000" stroke-width="1.2"/><rect x="0" y="3" width="6.5" height="1.6" fill="#000"/></svg>
<svg style="left:1896px;top:496px" width="9" height="9" viewBox="0 0 9 9"><path d="M0.8 0.8L8.2 8.2M8.2 0.8L0.8 8.2" stroke="#000" stroke-width="1.6"/></svg>
<div class="a" style="left:1734px;top:515px;width:162px;height:15px;background:#62cdfa"></div>
<div class="a" style="left:1804px;top:515px;width:70px;height:15px;background:#007800"></div>
<div class="a" style="left:1734px;top:515px;width:162px;height:278px;overflow:hidden"><div class="m" style="position:absolute;left:0px;top:2px"><span style="color:#0000ff">FFB1FB80</span>  <span style="color:#50c8f0">00000000</span>  <span style="color:#808080"></span>
<span style="color:#808080">FFB1FB84</span>  <span style="color:#008000">FFB1FB01</span>  <span style="color:#808080">[st</span>
<span style="color:#808080">FFB1FB88</span>  <span style="color:#008000">F5016B40</span>  <span style="color:#808080">[an</span>
<span style="color:#808080">FFB1FB8C</span>  <span style="color:#008000">F4F7DE28</span>  <span style="color:#808080">lib</span>
<span style="color:#808080">FFB1FB90</span>  <span style="color:#008000">F4FFC000</span>  <span style="color:#808080">[an</span>
<span style="color:#808080">FFB1FB94</span>  <span style="color:#008000">FFB1FC74</span>  <span style="color:#808080">[st</span>
<span style="color:#808080">FFB1FB98</span>  <span style="color:#008000">F6F85EC0</span>  <span style="color:#808080">deb</span>
<span style="color:#808080">FFB1FB9C</span>  <span style="color:#008000">F4F7F800</span>  <span style="color:#808080">deb</span>
<span style="color:#808080">FFB1FBA0</span>  <span style="color:#008000">F3C8603C</span>  <span style="color:#000080">JNI_</span>
<span style="color:#808080">FFB1FBA4</span>  <span style="color:#008000">F4F87240</span>  <span style="color:#808080">[an</span>
<span style="color:#808080">FFB1FBA8</span>  <span style="color:#008000">FFB1FBC0</span>  <span style="color:#808080">[st</span>
<span style="color:#808080">FFB1FBAC</span>  <span style="color:#008000">EB6FDC18</span>  <span style="color:#808080">[an</span>
<span style="color:#808080">FFB1FBB0</span>  <span style="color:#008000">00000000</span>  <span style="color:#808080"></span>
<span style="color:#808080">FFB1FBB4</span>  <span style="color:#008000">EB6FDC48</span>  <span style="color:#808080">[an</span>
<span style="color:#808080">FFB1FBB8</span>  <span style="color:#008000">00000057</span>  <span style="color:#808080"></span>
<span style="color:#808080">FFB1FBBC</span>  <span style="color:#008000">EB6FDC00</span>  <span style="color:#808080">[an</span>
<span style="color:#808080">FFB1FBC0</span>  <span style="color:#008000">EA5C5CC0</span>  <span style="color:#808080">[an</span>
<span style="color:#808080">FFB1FBC4</span>  <span style="color:#008000">FFB1FC01</span>  <span style="color:#808080">[st</span></div></div>
<div class="a" style="left:1734px;top:793px;width:162px;height:21px;background:#f0f0f0"></div>
<div class="a" style="left:1734px;top:793px;width:162px;height:21px;overflow:hidden">
<div class="u" style="left:0px;top:6px;color:#000;"><i style="transform:scaleX(0.703)">U</i><i style="transform:scaleX(0.703)">N</i><i style="transform:scaleX(0.703)">K</i><i style="transform:scaleX(0.703)">N</i><i style="transform:scaleX(0.703)">O</i><i style="transform:scaleX(0.538)">W</i><i style="transform:scaleX(0.703)">N</i></div>
<div class="a" style="left:45px;top:3px;width:1px;height:16px;background:#dcdcdc"></div>
<div class="u" style="left:48px;top:6px;color:#000;"><i style="transform:scaleX(0.912)">F</i><i style="transform:scaleX(0.912)">F</i><i style="transform:scaleX(0.761)">B</i><i>1</i><i style="transform:scaleX(0.912)">F</i><i style="transform:scaleX(0.761)">B</i><i>8</i><i>0</i><i>:</i></div>
<div class="a" style="left:103px;top:3px;width:1px;height:16px;background:#dcdcdc"></div>
<div class="u" style="left:108px;top:6px;color:#000;"><i>(</i><i style="transform:scaleX(0.912)">S</i><i>y</i><i>n</i><i>c</i><i>h</i><i>r</i><i>o</i><i>n</i><i>i</i><i>z</i><i>e</i><i>d</i><i>&nbsp;</i><i style="transform:scaleX(0.703)">w</i><i>i</i><i>t</i><i>h</i><i>&nbsp;</i><i style="transform:scaleX(0.912)">S</i><i style="transform:scaleX(0.912)">P</i><i>)</i></div>
</div>
<div class="a" style="left:1896px;top:515px;width:14px;height:299px;background:#f0f0f0"></div>
<svg style="left:1899px;top:521px" width="9" height="5" viewBox="0 0 9 5"><path d="M0.5 4.5L4.5 0.8L8.5 4.5" fill="none" stroke="#606060" stroke-width="2"/></svg>
<div class="a" style="left:1897px;top:778px;width:13px;height:18px;background:#cdcdcd"></div>
<svg style="left:1899px;top:805px" width="9" height="5" viewBox="0 0 9 5"><path d="M0.5 0.5L4.5 4.2L8.5 0.5" fill="none" stroke="#606060" stroke-width="2"/></svg>
<div class="a" style="left:1734px;top:814px;width:176px;height:17px;background:#f0f0f0"></div>
<svg style="left:1739px;top:818px" width="7" height="10" viewBox="0 0 7 10"><path d="M5.5 1L1.5 5L5.5 9" fill="none" stroke="#606060" stroke-width="2"/></svg>
<div class="a" style="left:1751px;top:815px;width:51px;height:15px;background:#cdcdcd"></div>
<svg style="left:1885px;top:818px" width="7" height="10" viewBox="0 0 7 10"><path d="M1.5 1L5.5 5L1.5 9" fill="none" stroke="#606060" stroke-width="2"/></svg>
<div class="a" style="left:0px;top:835px;width:1910px;height:25px;background:#f0f0f0;border-top:1px solid #b4b4b4"></div>
<div class="a" style="left:0px;top:857px;width:1910px;height:1px;background:#c4c4c4"></div>
<div class="a" style="left:0px;top:860px;width:1910px;height:1px;background:#8a8a8a"></div>
<div class="a" style="left:0px;top:861px;width:1910px;height:126px;background:#fff"></div>
<svg style="left:0px;top:839px" width="14" height="16" viewBox="0 0 14 16"><rect x="-1.5" y="0.5" width="15" height="15" fill="#f4f8ff" stroke="#1f4a90"/><rect x="-1" y="0" width="15" height="2" fill="#3c8cf0"/><path d="M1 5H11M1 7.5H11M1 10H11M1 12.5H11" stroke="#1f4a90" stroke-width="0.9"/></svg>
<div class="u" style="left:19px;top:841px;color:#000;"><i style="transform:scaleX(0.703)">O</i><i>u</i><i>t</i><i>p</i><i>u</i><i>t</i><i>&nbsp;</i><i style="transform:scaleX(0.703)">w</i><i>i</i><i>n</i><i>d</i><i>o</i><i style="transform:scaleX(0.703)">w</i></div>
<svg style="left:1851px;top:842px" width="9" height="9" viewBox="0 0 9 9"><rect x="0.5" y="0.5" width="8" height="8" fill="none" stroke="#000" stroke-width="1.2"/><rect x="0" y="0" width="9" height="2" fill="#000"/></svg>
<svg style="left:1874px;top:842px" width="9" height="9" viewBox="0 0 9 9"><rect x="3" y="0.5" width="5.5" height="5" fill="none" stroke="#000" stroke-width="1.2"/><rect x="3" y="0" width="6" height="1.6" fill="#000"/><rect x="0.5" y="3.5" width="5.5" height="5" fill="#fff" stroke="#000" stroke-width="1.2"/><rect x="0" y="3" width="6.5" height="1.6" fill="#000"/></svg>
<svg style="left:1896px;top:842px" width="9" height="9" viewBox="0 0 9 9"><path d="M0.8 0.8L8.2 8.2M8.2 0.8L0.8 8.2" stroke="#000" stroke-width="1.6"/></svg>
<div class="a m" style="left:-1px;top:869px;color:#000">The initial autoanalysis has been finished.
F3C8A000: loaded /data/app/com.example.javandk1-1/oat/arm/base.odex
F3C85000: loaded /data/app/com.example.javandk1-1/lib/arm/libjavandk1.so
Caching 'Modules'... ok
Caching 'Module: libjavandk1.so'... ok
Caching 'Modules'... ok
PDBSRC: loading symbols for '/data/app/com.example.javandk1-1/lib/arm/libjavandk1.so'...
Received IOCTL failure code: -1.</div>
<div class="a" style="left:1897px;top:861px;width:13px;height:126px;background:#f0f0f0"></div>
<svg style="left:1899px;top:867px" width="9" height="5" viewBox="0 0 9 5"><path d="M0.5 4.5L4.5 0.8L8.5 4.5" fill="none" stroke="#606060" stroke-width="2"/></svg>
<div class="a" style="left:1897px;top:952px;width:13px;height:18px;background:#cdcdcd"></div>
<svg style="left:1899px;top:976px" width="9" height="5" viewBox="0 0 9 5"><path d="M0.5 0.5L4.5 4.2L8.5 0.5" fill="none" stroke="#606060" stroke-width="2"/></svg>
<div class="a" style="left:0px;top:987px;width:1910px;height:2px;background:#a0a0a0"></div>
<div class="a" style="left:0px;top:989px;width:1910px;height:11px;background:#f0f0f0"></div>
<div class="a" style="left:0px;top:990px;width:41px;height:12px;background:#e1e1e1;border:1px solid #adadad"></div>
<div class="u" style="left:1px;top:995px;color:#000;"><i style="transform:scaleX(0.912)">P</i><i>y</i><i>t</i><i>h</i><i>o</i><i>n</i></div>
<div class="a" style="left:46px;top:990px;width:1864px;height:12px;background:#fff;border:1px solid #7a7a7a;border-right:none"></div>
</body></html>
